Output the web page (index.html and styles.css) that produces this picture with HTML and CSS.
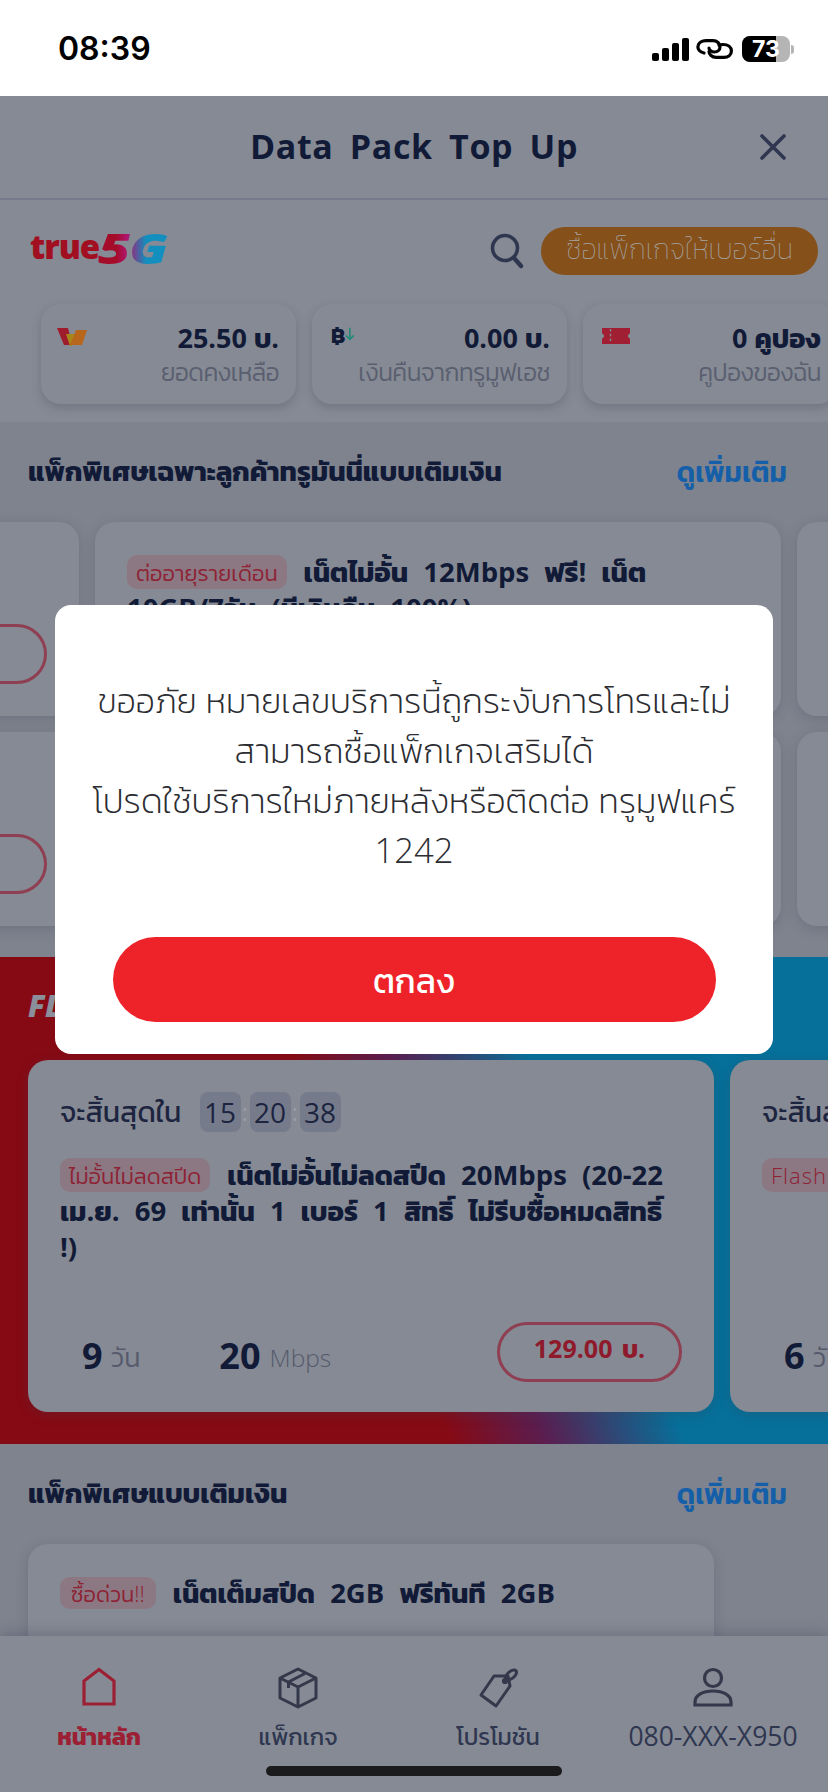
FILE: index.html
```html
<!DOCTYPE html>
<html lang="th">
<head>
<meta charset="utf-8">
<title>Data Pack Top Up</title>
<link rel="stylesheet" href="styles.css">
</head>
<body>
<div class="app">
  <div class="status">
    <span class="time">08:39</span>
    <div class="status-icons">
      <svg class="sig" width="37" height="23" viewBox="0 0 37 23"><rect x="0" y="15" width="7" height="8" rx="2"/><rect x="10" y="10" width="7" height="13" rx="2"/><rect x="20" y="5" width="7" height="18" rx="2"/><rect x="30" y="0" width="7" height="23" rx="2"/></svg>
      <svg class="link" width="37" height="20" viewBox="0 0 37 20" fill="none" stroke="#000" stroke-width="3.200" stroke-linecap="round"><path d="M8 14C3.500 13 1.500 10 2 7C2.500 3.500 6 1.600 10 1.600H17C21 1.600 24 4.500 24 8C24 11 21.500 13 18.500 13C15.500 13 13 11 13 9"/><path d="M23 6C24 5.700 25 5.500 27 5.500C32 5.500 35.400 8 35.400 12C35.400 16 32 18.400 28 18.400H20C16 18.400 13 15.500 13 12.500"/></svg>
      <div class="batt"><div class="batt-body"><span class="batt-fill"></span><span class="batt-num">73</span></div><span class="batt-tip"></span></div>
    </div>
  </div>

  <header class="head">
    <h1 class="title">Data Pack Top Up</h1>
    <svg class="close" width="26" height="26" viewBox="0 0 26 26" fill="none" stroke="#2f3750" stroke-width="3.600" stroke-linecap="round"><path d="M2 2L24 24M24 2L2 24"/></svg>
  </header>

  <main class="content">
    <section class="top">
      <div class="brand-row">
        <div class="logo"><span class="logo-true">true</span><span class="logo-5g">5G</span></div>
        <svg class="search" width="34" height="36" viewBox="0 0 34 36" fill="none" stroke="#2f3750" stroke-width="3.600" stroke-linecap="round"><circle cx="15" cy="15" r="12.500"/><path d="M24 25L31 33" stroke-width="4.400"/></svg>
        <div class="buy-other">ซื้อแพ็กเกจให้เบอร์อื่น</div>
      </div>
      <div class="balances">
        <div class="bal">
          <svg class="bal-icon" width="30" height="18" viewBox="0 0 30 18"><path d="M0 0H11L15 17H7Z" fill="#9e1c2c"/><path d="M9 6H20L15 18H13Z" fill="#a8871a"/><path d="M19 2H30L25 17H13Z" fill="#b8661c"/></svg>
          <div class="bal-text"><div class="bal-val">25.50 บ.</div><div class="bal-lab">ยอดคงเหลือ</div></div>
        </div>
        <div class="bal">
          <div class="bal-icon baht"><span>฿</span><svg width="11" height="16" viewBox="0 0 11 16" fill="none" stroke="#1f8a78" stroke-width="1.800"><path d="M5.500 1V14M1 9.500L5.500 14L10 9.500"/></svg></div>
          <div class="bal-text"><div class="bal-val">0.00 บ.</div><div class="bal-lab">เงินคืนจากทรูมูฟเอช</div></div>
        </div>
        <div class="bal">
          <svg class="bal-icon coupon" width="28" height="16" viewBox="0 0 28 16"><path d="M0 0H28V5L25.500 8L28 11V16H0V11L2.500 8L0 5Z" fill="#a01f32"/><path d="M8.500 1V15" stroke="#868a94" stroke-width="1.400" stroke-dasharray="2.400 2.400"/></svg>
          <div class="bal-text"><div class="bal-val">0 คูปอง</div><div class="bal-lab">คูปองของฉัน</div></div>
        </div>
      </div>
    </section>

    <section class="sec sec-a">
      <div class="sec-head"><h2 class="sec-title">แพ็กพิเศษเฉพาะลูกค้าทรูมันนี่แบบเติมเงิน</h2><a class="more">ดูเพิ่มเติม</a></div>
      <div class="rail">
        <article class="card small"><div class="spacer"></div><div class="price ghost"></div></article>
        <article class="card small"><p class="card-title"><span class="tag">ต่ออายุรายเดือน</span>เน็ตไม่อั้น 12Mbps ฟรี! เน็ต<br>10GB/7วัน (มีเงินคืน 100%)</p></article>
        <article class="card small"></article>
      </div>
      <div class="rail rail-2">
        <article class="card small"><div class="spacer"></div><div class="price ghost"></div></article>
        <article class="card small"></article>
        <article class="card small"></article>
      </div>
    </section>

    <section class="flash">
      <div class="flash-label">FLASH SALE</div>
      <div class="rail flash-rail">
        <article class="card big">
          <div class="count"><span class="count-lab">จะสิ้นสุดใน</span><span class="tbox">15</span><span class="tsep">:</span><span class="tbox">20</span><span class="tsep">:</span><span class="tbox">38</span></div>
          <p class="card-title big-title"><span class="tag">ไม่อั้นไม่ลดสปีด</span>เน็ตไม่อั้นไม่ลดสปีด 20Mbps (20-22<br>เม.ย. 69 เท่านั้น 1 เบอร์ 1 สิทธิ์ ไม่รีบซื้อหมดสิทธิ์<br>!)</p>
          <div class="meta">
            <span class="num">9</span><span class="unit">วัน</span>
            <span class="num num-2">20</span><span class="unit unit-latin">Mbps</span>
            <div class="price">129.00 บ.</div>
          </div>
        </article>
        <article class="card big">
          <div class="count"><span class="count-lab">จะสิ้นสุดใน</span></div>
          <p class="card-title big-title"><span class="tag tag-latin">Flash Sale</span></p>
          <div class="meta"><span class="num">6</span><span class="unit">วัน</span></div>
        </article>
      </div>
    </section>

    <section class="sec sec-b">
      <div class="sec-head"><h2 class="sec-title">แพ็กพิเศษแบบเติมเงิน</h2><a class="more">ดูเพิ่มเติม</a></div>
      <article class="card last"><p class="card-title"><span class="tag tag-c">ซื้อด่วน!!</span>เน็ตเต็มสปีด 2GB ฟรีทันที 2GB</p></article>
    </section>
  </main>

  <nav class="nav">
    <div class="nav-item active">
      <svg width="40" height="42" viewBox="0 0 40 42" fill="none" stroke="#9c2034" stroke-width="3.200"><path d="M5 37V14L20 2.500L35 14V37Z"/></svg>
      <span>หน้าหลัก</span>
    </div>
    <div class="nav-item">
      <svg width="40" height="42" viewBox="0 0 40 42" fill="none" stroke="#33384a" stroke-width="3" stroke-linejoin="round"><path d="M20 2L38 11V31L20 40L2 31V11Z"/><path d="M2 11L20 20L38 11M20 20V40M10.500 15L27 6.500M10.500 15V21"/></svg>
      <span>แพ็กเกจ</span>
    </div>
    <div class="nav-item">
      <svg width="40" height="42" viewBox="0 0 40 42" fill="none" stroke="#33384a" stroke-width="3" stroke-linejoin="round"><path d="M3 28L18 39L32 19L30 9L16 9Z"/><circle cx="27" cy="14" r="1.600"/><ellipse cx="33" cy="8" rx="6.500" ry="3.500" transform="rotate(-40 33 8)"/></svg>
      <span>โปรโมชัน</span>
    </div>
    <div class="nav-item phone">
      <svg width="40" height="42" viewBox="0 0 40 42" fill="none" stroke="#33384a" stroke-width="3.200"><circle cx="20" cy="11" r="8.500"/><path d="M2 38V35C2 28 10 24 20 24C30 24 38 28 38 35V38Z"/></svg>
      <span>080-XXX-X950</span>
    </div>
  </nav>

  <div class="home-bar"></div>

  <div class="overlay">
    <div class="modal">
      <p class="modal-text">ขออภัย หมายเลขบริการนี้ถูกระงับการโทรและไม่<br>สามารถซื้อแพ็กเกจเสริมได้<br>โปรดใช้บริการใหม่ภายหลังหรือติดต่อ ทรูมูฟแคร์<br>1242</p>
      <button class="ok">ตกลง</button>
    </div>
  </div>
</div>
</body>
</html>
```
FILE: styles.css
```css
* { box-sizing: border-box; margin: 0; padding: 0; }
html, body { width: 828px; height: 1792px; overflow: hidden; background: #868a94; }
body { font-family: "Open Sans", "Noto Sans", "Kanit", "Prompt", "Noto Sans Thai", sans-serif; color: #111a36; }
.app { position: relative; width: 828px; height: 1792px; display: flex; flex-direction: column; overflow: hidden; }

.status { height: 96px; background: #fff; display: flex; justify-content: space-between; align-items: flex-start; padding: 29px 34px 0 58px; flex: none; }
.time { font-family: Inter, sans-serif; font-weight: 600; font-size: 32px; line-height: 40px; color: #000; }
.status-icons { display: flex; align-items: center; gap: 7px; padding-top: 7px; }
.batt { display: flex; align-items: center; gap: 1px; margin-left: 2px; }
.batt-body { position: relative; width: 48px; height: 26px; background: #b5b5b5; border-radius: 8px; overflow: hidden; display: flex; align-items: center; justify-content: center; }
.batt-fill { position: absolute; left: 0; top: 0; bottom: 0; width: 34px; background: #000; }
.batt-num { position: relative; font-family: Inter, sans-serif; font-weight: 700; font-size: 23px; color: #fff; }
.batt-tip { width: 3px; height: 9px; background: #b5b5b5; border-radius: 0 3px 3px 0; }

.head { height: 104px; flex: none; border-bottom: 2px solid #757a8a; display: flex; align-items: center; justify-content: center; position: relative; padding-bottom: 2px; }
.title { font-size: 34px; font-weight: 700; letter-spacing: .6px; word-spacing: 7px; color: #111a36; }
.close { position: absolute; right: 42px; top: 38px; }

.content { flex: 1; min-height: 0; overflow: hidden; display: flex; flex-direction: column; }
.top { height: 222px; flex: none; padding: 26px 10px 0 30px; }
.brand-row { display: flex; align-items: center; height: 50px; }
.logo { display: flex; align-items: baseline; font-weight: 800; font-size: 33px; letter-spacing: -1px; line-height: 40px; margin-top: -12px; }
.logo-true { color: #a10f20; }
.logo-5g { display: inline-block; margin-left: -1px; transform: translateY(5px) scaleX(1.3); transform-origin: left center; font-style: italic; background: linear-gradient(90deg, #a50c2a 0 27%, #b01570 42%, #128fbe 70%); -webkit-background-clip: text; background-clip: text; color: transparent; font-size: 43px; }
.search { margin-left: auto; margin-right: 17px; }
.buy-other { width: 277px; height: 48px; border-radius: 24px; background: #85501a; color: #a5a3a0; font-size: 28px; line-height: 42px; text-align: center; white-space: nowrap; font-weight: 250; }
.balances { display: flex; gap: 16px; margin: 28px 0 0 11px; width: 900px; }
.bal { width: 255px; height: 100px; flex: none; border-radius: 20px; background: #868a94; box-shadow: 0 4px 10px rgba(60,65,85,.28); padding: 17px 17px 0 16px; display: flex; justify-content: space-between; }
.bal-icon { margin-top: 7px; flex: none; }
.coupon { margin-left: 3px; }
.bal-text { text-align: right; white-space: nowrap; }
.bal-val { font-weight: 700; font-size: 27px; height: 34px; line-height: 34px; color: #111a36; }
.bal-lab { font-size: 24.500px; letter-spacing: -.5px; font-weight: 300; height: 34px; line-height: 34px; color: #5a5f70; }
.baht { display: flex; align-items: center; font-size: 22px; font-weight: 700; line-height: 18px; height: 20px; width: 24px; margin: 3px 0 0 3px; }

.sec { background: #7f838e; }
.sec-a { height: 535px; flex: none; padding-top: 28px; }
.sec-head { display: flex; justify-content: space-between; align-items: center; padding: 0 41px 0 28px; height: 42px; }
.sec-title { font-size: 27.500px; font-weight: 700; color: #111a36; line-height: 42px; }
.more { font-size: 28px; font-weight: 600; color: #145fa8; line-height: 42px; }
.rail { display: flex; gap: 16px; margin-left: -607px; margin-top: 30px; width: 3000px; }
.rail-2 { margin-top: 16px; }
.card { width: 686px; flex: none; background: #868a94; border-radius: 20px; box-shadow: 0 3px 12px rgba(60,65,85,.25); }
.small { height: 194px; padding: 32px; display: flex; flex-direction: column; }
.spacer { flex: 1; }
.card-title { font-size: 27.500px; line-height: 36px; font-weight: 700; color: #111a36; word-spacing: 8px; white-space: nowrap; }
.tag { display: inline-block; background: #8c7883; color: #8e2234; font-size: 22px; font-weight: 300; line-height: 34px; height: 34px; border-radius: 10px; padding: 0 9px; margin-right: 17px; word-spacing: 0; vertical-align: 1px; }
.price { width: 185px; height: 60px; border: 3.500px solid #8f3f52; border-radius: 30px; align-self: flex-end; display: flex; align-items: center; justify-content: center; color: #8e1a2c; font-size: 25px; font-weight: 700; word-spacing: 3px; margin-left: auto; padding-bottom: 7px; }
.ghost { height: 60px; }

.flash { height: 487px; flex: none; position: relative; background: linear-gradient(68deg, #860a14 44%, #5a1e50 53.500%, #06709a 67%); padding-top: 103px; }
.flash-label { position: absolute; left: 28px; top: 28px; font-style: italic; font-weight: 800; font-size: 30px; color: #8b8f9b; }
.flash-rail { margin: 0 0 0 28px; }
.big { height: 352px; padding: 32px 32px 30px; display: flex; flex-direction: column; }
.count { display: flex; align-items: center; height: 40px; }
.count-lab { font-size: 28.500px; width: 139.500px; flex: none; color: #1c2440; white-space: nowrap; }
.tbox { width: 41px; height: 40px; border-radius: 8px; background: #767b8c; text-align: center; line-height: 40px; font-size: 28px; color: #1c2440; }
.tsep { width: 9px; text-align: center; color: #9a9da8; font-size: 24px; line-height: 36px; }
.big-title { margin-top: 25px; flex: 1; }
.tag-latin { letter-spacing: 1px; }
.meta { display: flex; align-items: center; padding-left: 22px; height: 60px; }
.num { font-weight: 700; font-size: 36px; color: #111a36; margin-right: 8px; padding-top: 6px; }
.num-2 { margin-left: 79px; margin-right: 9px; }
.unit { font-size: 27px; font-weight: 300; color: #555a6c; margin-top: 10px; }
.unit-latin { font-size: 24.500px; }

.sec-b { flex: 1; min-height: 0; padding-top: 28px; overflow: hidden; }
.last { margin: 30px 0 0 28px; height: 200px; padding: 31px 32px; }
.tag-c { padding: 0 11px; height: 32px; line-height: 32px; }

.nav { height: 156px; flex: none; background: #868a94; box-shadow: 0 -4px 12px rgba(60,65,85,.3); display: grid; grid-template-columns: 198px 200px 200px 230px; padding-top: 31px; position: relative; }
.nav-item { display: flex; flex-direction: column; align-items: center; height: 90px; color: #2f3750; font-size: 23.500px; white-space: nowrap; }
.nav-item svg { flex: none; margin-bottom: 9px; }
.nav-item span { line-height: 36px; height: 36px; }
.phone { font-size: 26.500px; }
.active { color: #9c2034; font-weight: 700; }

.home-bar { position: absolute; left: 266px; bottom: 16px; width: 296px; height: 10px; border-radius: 5px; background: #1b1b1d; }

.overlay { position: absolute; left: 0; right: 0; top: 605px; display: flex; justify-content: center; }
.modal { width: 718px; height: 449px; background: #fff; border-radius: 16px; padding: 70px 20px 32px; display: flex; flex-direction: column; align-items: center; }
.modal-text { font-size: 34.500px; font-weight: 275; line-height: 50px; text-align: center; color: #2c2d32; flex: 1; white-space: nowrap; }
.ok { width: 603px; height: 85px; flex: none; border: 0; border-radius: 43px; background: #ee232a; color: #fff; font-family: inherit; font-size: 34px; padding-top: 2px; }
```
